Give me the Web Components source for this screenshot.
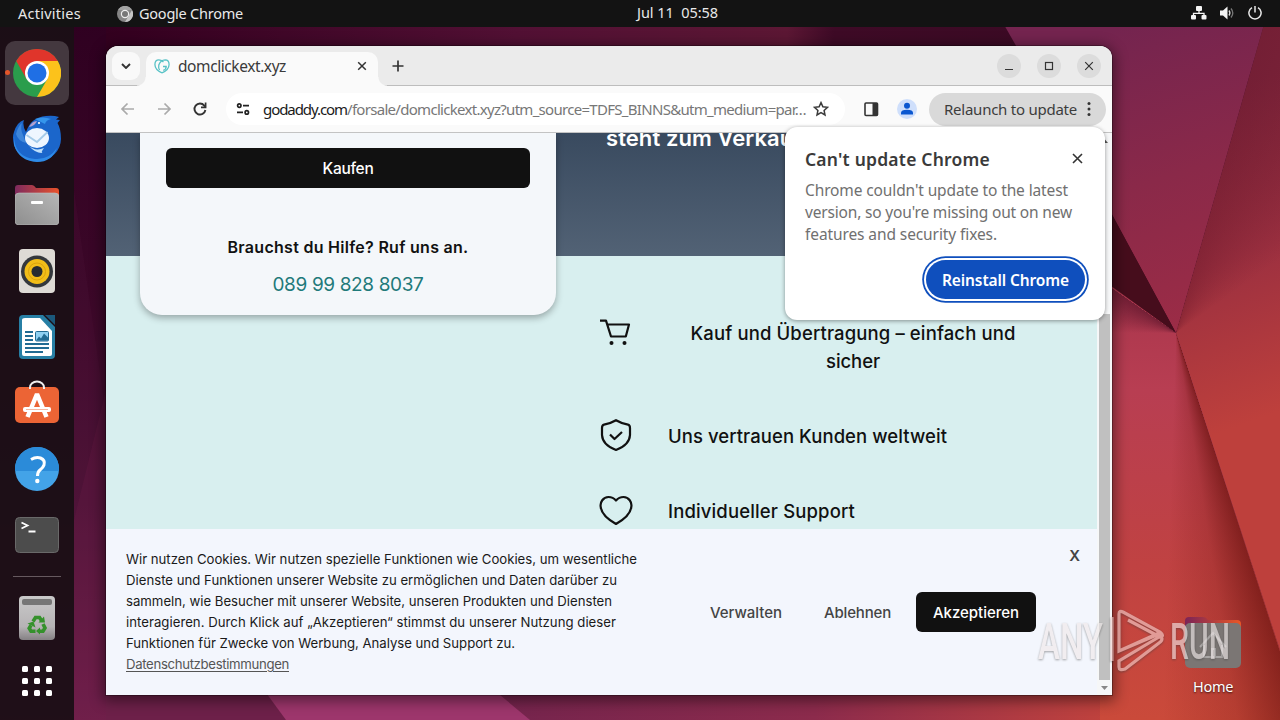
<!DOCTYPE html>
<html lang="de">
<head>
<meta charset="utf-8">
<title>Desktop</title>
<style>
html,body{margin:0;height:100%;overflow:hidden;background:#300020}
body{font-family:"Noto Sans","Open Sans",sans-serif}
</style>
</head>
<body>
<desk-top>
  <top-bar slot="bar"></top-bar>
  <side-dock slot="dock"></side-dock>
  <browser-window slot="window"><sale-page></sale-page></browser-window>
  <home-icon slot="icon"></home-icon>
  <water-mark slot="mark"></water-mark>
</desk-top>
<script>
function component(name, css, html) {
  const t = document.createElement('template');
  t.innerHTML = '<style>' + css + '</style>' + html;
  customElements.define(name, class extends HTMLElement {
    constructor() {
      super();
      this.attachShadow({mode: 'open'}).append(t.content.cloneNode(true));
    }
  });
}

component('desk-top', `
:host{display:block;position:relative;width:1280px;height:720px;overflow:hidden}
.wall,.folds{position:absolute;inset:0}
.folds{clip-path:inset(0 0 0 1105px);background:conic-gradient(at 1176px 333px,transparent 15.900deg,rgba(80,10,30,.3) 16deg,transparent 55deg,transparent 161.800deg,rgba(105,18,14,.7) 162deg,rgba(120,24,20,.25) 171deg,transparent 182deg,transparent 270deg,rgba(60,8,30,.5) 304.800deg,transparent 305deg)}
.shell{position:relative;height:720px;display:grid;grid-template:27px 693px/74px 1fr}
.canvas{position:relative}
::slotted([slot=window]){position:absolute;left:32px;top:19px}
::slotted([slot=icon]){position:absolute;left:1106px;top:585px}
::slotted([slot=mark]){position:absolute;left:956px;top:578px}
`, `
<svg class="wall" width="1280" height="720" viewBox="0 0 1280 720">
<defs>
<linearGradient id="l" x1="0" y1="0" x2="0" y2="1"><stop offset="0" stop-color="#2e0020"/><stop offset=".4" stop-color="#3b0728"/><stop offset=".7" stop-color="#4c1236"/><stop offset="1" stop-color="#701f4a"/></linearGradient>
<linearGradient id="t" x1="0" y1="0" x2="1" y2="0"><stop offset="0" stop-color="#33001f"/><stop offset=".35" stop-color="#521034"/><stop offset=".58" stop-color="#5c1734"/><stop offset=".62" stop-color="#3e0a26"/><stop offset="1" stop-color="#380a22"/></linearGradient>
<linearGradient id="a" x1="1110" y1="30" x2="1200" y2="330" gradientUnits="userSpaceOnUse"><stop offset="0" stop-color="#74244f"/><stop offset=".5" stop-color="#8a2949"/><stop offset="1" stop-color="#9c2c46"/></linearGradient>
<linearGradient id="b" x1="1200" y1="100" x2="1310" y2="400" gradientUnits="userSpaceOnUse"><stop offset="0" stop-color="#84283f"/><stop offset=".5" stop-color="#9c3040"/><stop offset="1" stop-color="#be403c"/></linearGradient>
<linearGradient id="c" x1="0" y1="280" x2="0" y2="720" gradientUnits="userSpaceOnUse"><stop offset="0" stop-color="#a8354c"/><stop offset=".25" stop-color="#b83e52"/><stop offset=".65" stop-color="#c04242"/><stop offset="1" stop-color="#ca4a3a"/></linearGradient>
<linearGradient id="d" x1="500" y1="0" x2="1130" y2="0" gradientUnits="userSpaceOnUse"><stop offset="0" stop-color="#75244d"/><stop offset=".5" stop-color="#8c2b4c"/><stop offset="1" stop-color="#c4443c"/></linearGradient>
</defs>
<rect width="1280" height="720" fill="url(#l)"/>
<path d="M74 190l32 225v305H74z" fill="#64204a" opacity=".12"/><path d="M74 520l32-130v330H74z" fill="#7a2450" opacity=".18"/>
<rect x="106" width="1174" height="60" fill="url(#t)"/>
<path d="M230 690H1120v30H230z" fill="url(#d)"/>
<path d="M106 690H268l18 30H106z" fill="#6d2049"/>
<path d="M264 690H494l36 30H286z" fill="#9d366c"/>
<path d="M990 0H1271L1176 333L1105 202z" fill="url(#a)"/>
<path d="M1271 0h9V650L1176 333z" fill="url(#b)"/>
<path d="M1100 192l76 141-76-53z" fill="#460d1c"/>
<path d="M1100 278L1176 333L1280 650V720H1100z" fill="url(#c)"/>
</svg>
<div class="folds"></div>
<div class="shell"><slot name="bar"></slot><slot name="dock"></slot>
<div class="canvas"><slot name="window"></slot><slot name="icon"></slot><slot name="mark"></slot></div></div>
`);

component('top-bar', `
:host{grid-column:1/3;display:flex;align-items:center;height:27px;background:#131313;color:#e9e9e9;font-size:14.5px;line-height:27px;box-sizing:border-box;padding-left:18px}
.app{margin-left:36px;margin-right:6px}
.clock{margin-left:394px;margin-top:-2px}
.sys{display:flex;align-items:center;gap:13px;margin-left:473px;margin-top:-1px}
svg{display:block}
`, `
<fit-text w="63">Activities</fit-text>
<svg class="app" width="16" height="16" viewBox="0 0 16 16"><circle cx="8" cy="8" r="8" fill="#858585"/><path d="M1 4a8 8 0 0 1 14 0H8z" fill="#a2a2a2"/><path d="M15 4a8 8 0 0 1-7 12l3.500-6z" fill="#c4c4c4"/><circle cx="8" cy="8" r="4.200" fill="#eee"/><circle cx="8" cy="8" r="3" fill="#777"/></svg>
<fit-text w="104">Google Chrome</fit-text>
<fit-text class="clock" w="81">Jul 11  05:58</fit-text>
<div class="sys">
<svg width="16" height="14" viewBox="0 0 16 14" fill="#f4f4f4"><rect x="5" y="0" width="6" height="5" rx="1"/><rect x="0" y="9" width="5" height="4.5" rx="1"/><rect x="10.500" y="9" width="5" height="4.500" rx="1"/><path d="M8 5v3M2.500 9V7.300h10.500V9" fill="none" stroke="#f4f4f4" stroke-width="1.300"/></svg>
<svg width="15" height="14" viewBox="0 0 15 14" fill="#f4f4f4"><path d="M0 4.500h3L7.500 0.500v13L3 9.500H0z"/><path d="M9 4.500q1.800 2.500 0 5" fill="none" stroke="#ddd" stroke-width="1.300"/><path d="M11 2.500q3.600 4.500 0 9" fill="none" stroke="#777" stroke-width="1.300"/></svg>
<svg width="14" height="14" viewBox="0 0 14 14" fill="none" stroke="#e8e8e8" stroke-width="1.500"><path d="M4 1.600a6.100 6.100 0 1 0 6 0M7 0v6.500"/></svg>
</div>
`);

component('dock-item', `
:host{display:flex;width:64px;height:64px;border-radius:10px;align-items:center;justify-content:center;position:relative}
:host([active]){background:#44383f}
:host([active])::before{content:"";position:absolute;left:0;top:29px;width:5px;height:5px;border-radius:3px;background:#e5562a}
`, `<slot></slot>`);

component('side-dock', `
:host{display:flex;flex-direction:column;align-items:center;gap:2px;height:693px;box-sizing:border-box;padding-top:14px;background:rgba(27,15,21,.94)}
hr{width:48px;height:1px;border:0;margin:7px 0;background:#66595f;flex:none}
svg{display:block}
.apps{margin-top:-3px}
`, `
<dock-item active><svg width="48" height="48" viewBox="-24 -24 48 48"><circle r="24" fill="#2a9d4c"/><path d="M20.800-12A24 24 0 0 1 0 24L10.400 6 0-12z" fill="#fcc21b"/><path d="M-20.800-12A24 24 0 0 1 20.800-12H0L-10.400 6z" fill="#e0352b"/><circle r="12" fill="#fff"/><circle r="9.500" fill="#1f6fe5"/></svg></dock-item>
<dock-item><svg width="48" height="48" viewBox="0 0 48 48"><path d="M1 17Q4 7 11 5Q9 10 13 17Q18 2 33 1Q40 0 46 2L43 4.500L47 5L44.500 8Q48 14 48 24A24 23 0 0 1 1 30Q-1 22 1 17z" fill="#1b66cb"/><path d="M1 20Q1 42 22 44Q36 45 44 33Q39 47 24 47Q6 46 1 30z" fill="#2f8be8"/><path d="M3 19q2-8 6-11-2 6 1 12l3 8q-8-2-10-9z" fill="#3e86da"/><path d="M22 4Q30 1 38 4q-5 1-6 5z" fill="#3596ec"/><ellipse cx="24" cy="23" rx="12" ry="10" fill="#eef6ff"/><path d="M13.500 20l10.500 7 10.500-10" fill="none" stroke="#a5cbe9" stroke-width="1.800"/><path d="M15 30q7 7 16 3-4 5-1 5-7 1-15-8z" fill="#bfe0fb"/><path d="M16 12q3-6 8-6-2 5-8 6z" fill="#b4a0cf"/><circle cx="26" cy="8" r="1.100" fill="#fff"/></svg></dock-item>
<dock-item><svg width="44" height="40" viewBox="0 0 44 40"><defs><linearGradient id="f"><stop stop-color="#7e2a5e"/><stop offset="1" stop-color="#e9522b"/></linearGradient><linearGradient id="g" x1="0" y1="1" x2="1" y2="0"><stop stop-color="#8e8e8e"/><stop offset="1" stop-color="#b6b6b6"/></linearGradient></defs><path d="M0 14V3q0-3 3-3h14q2 0 4 3h20q3 0 3 3v8z" fill="url(#f)"/><rect y="8" width="44" height="32" rx="4" fill="url(#g)" stroke="#c0c0c0" stroke-width=".6"/><rect x="16" y="16" width="12" height="3" rx="1" fill="#fff"/></svg></dock-item>
<dock-item><svg width="36" height="44" viewBox="0 0 36 44"><rect width="36" height="44" rx="4" fill="#dedad5"/><circle cx="18" cy="22.500" r="16" fill="#34373c"/><circle cx="18" cy="22.500" r="12.500" fill="#f2bd18"/><circle cx="18" cy="22.500" r="8.500" fill="none" stroke="#dba30e"/><circle cx="18" cy="22.500" r="5.500" fill="#272b31"/></svg></dock-item>
<dock-item><svg width="36" height="44" viewBox="0 0 36 44"><path d="M4 0h20l12 12v28q0 4-4 4H4q-4 0-4-4V4q0-4 4-4z" fill="#277fa5"/><path d="M26 0h10v10z" fill="#1b587b"/><path d="M6 3h15l12 13v23q0 2-2 2H5q-2 0-2-2V5q0-2 3-2z" fill="#fff"/><path d="M6 17h8m-8 4h8m-8 4h8m-8 4h24M6 33h24M6 37h18" stroke="#226b93" stroke-width="1.800"/><rect x="16.500" y="16.500" width="13" height="9.500" rx="1" fill="#8fd0f2" stroke="#226b93"/><path d="M17 25.500l3-4 2 2 3-5 4 4v3z" fill="#226b93"/></svg></dock-item>
<dock-item><svg width="44" height="44" viewBox="0 0 44 44" style="margin-top:-5px"><rect y="8" width="44" height="36" rx="5" fill="#ec6435"/><path d="M15 10V8.500a7 6 0 0 1 14 0V10" fill="none" stroke="#eee" stroke-width="2"/><path d="M12.500 38l9.500-23 9.500 23" fill="none" stroke="#fff" stroke-width="4.500" stroke-linejoin="bevel"/><rect x="8" y="28" width="28" height="5" rx="2" fill="#fff"/><path d="M11 30.500h22" stroke="#f4b8a2" stroke-width="1"/></svg></dock-item>
<dock-item><svg width="44" height="44" viewBox="0 0 44 44"><circle cx="22" cy="22" r="22" fill="#43a3e8"/><path d="M.1 24A22 22 0 1 1 43.900 24z" fill="#2b8bd9"/><path d="M16 12.500q5-3 9.500-1.500 5 2 3.500 7-.8 2.500-4 5-2.500 2-2.500 6" fill="none" stroke="#fff" stroke-width="3"/><circle cx="22.300" cy="34" r="2.200" fill="#fff"/></svg></dock-item>
<dock-item><svg width="44" height="36" viewBox="0 0 44 36"><rect x=".5" y=".5" width="43" height="35" rx="4" fill="#4c4c4c" stroke="#696969"/><path d="M6.500 5.500l6 3-6 3M13.500 14.500h7" fill="none" stroke="#fff" stroke-width="1.800"/></svg></dock-item>
<hr>
<dock-item><svg width="36" height="44" viewBox="0 0 36 44"><defs><linearGradient id="h" x2="0" y2="1"><stop stop-color="#c9c9c9"/><stop offset=".7" stop-color="#b6b3b5"/><stop offset="1" stop-color="#858184"/></linearGradient></defs><rect width="36" height="44" rx="4" fill="url(#h)"/><rect x="3" y="3" width="30" height="6" rx="2" fill="#767676"/><g fill="none" stroke="#35912c" stroke-width="3.600"><path d="M14 25.500l2.500-4h4l2 3"/><path d="M24 28l2 4-2 3.200h-3.500"/><path d="M16.500 35.200h-4.500l-1.800-3 1.800-3"/></g><path d="M19.500 26.500h6.500l-1-6zM21 31.500v7l-4-3.500zM8.500 27.500l6-2 2 6z" fill="#35912c"/></svg></dock-item>
<dock-item class="apps"><svg width="30" height="30" viewBox="0 0 30 30" fill="#fff"><rect width="6" height="6" rx="1.500"/><rect x="12" width="6" height="6" rx="1.500"/><rect x="24" width="6" height="6" rx="1.500"/><rect y="12" width="6" height="6" rx="1.500"/><rect x="12" y="12" width="6" height="6" rx="1.500"/><rect x="24" y="12" width="6" height="6" rx="1.500"/><rect y="24" width="6" height="6" rx="1.500"/><rect x="12" y="24" width="6" height="6" rx="1.500"/><rect x="24" y="24" width="6" height="6" rx="1.500"/></svg></dock-item>
`);

component('browser-window', `
:host{display:block;width:1006px;height:649px}
.win{display:flex;flex-direction:column;height:649px;border-radius:12px 12px 0 0;overflow:hidden;background:#fafafa;box-shadow:0 3px 14px 3px rgba(0,0,0,.45),0 0 0 1px rgba(0,0,0,.28)}
.view{display:flex;height:562px}
.page{display:block;width:991px;height:562px;overflow:hidden}
update-bubble{position:absolute;left:679px;top:81px}
`, `
<div class="win"><tab-strip></tab-strip><tool-bar></tool-bar>
<div class="view"><div class="page"><slot></slot></div><scroll-bar></scroll-bar></div></div>
<update-bubble></update-bubble>
`);

component('tab-strip', `
:host{display:flex;height:40px;box-sizing:border-box;padding:6px 11px 0 6px;background:linear-gradient(#ebebeb 39px,#bdbdbd 39px);color:#3b3b3b}
svg{display:block}
.search{width:28px;height:28px;border-radius:9px;background:#f9f9f9;display:grid;place-items:center}
.tab{position:relative;margin-left:6px;width:232px;height:34px;box-sizing:border-box;padding:0 11px 6px 8px;display:flex;align-items:center;background:#fafafa;border-radius:10px 10px 0 0;font-size:15.500px}
.tab::before,.tab::after{content:"";position:absolute;bottom:0;width:9px;height:9px}
.tab::before{left:-9px;background:radial-gradient(circle at 0 0,transparent 8px,#fafafa 9px)}
.tab::after{right:-9px;background:radial-gradient(circle at 100% 0,transparent 8px,#fafafa 9px)}
fit-text{margin-left:8px}
.x{margin-left:auto}
.plus{margin:8px 0 0 14px}
.ctl{margin-left:auto;display:flex;gap:16px;margin-top:2px}
.ctl i{width:24px;height:24px;border-radius:12px;background:#dcdcdc;display:grid;place-items:center}
`, `
<div class="search"><svg width="10" height="6" viewBox="0 0 10 6"><path d="M1 1l4 4 4-4" fill="none" stroke="#333" stroke-width="1.900"/></svg></div>
<div class="tab"><svg width="16" height="15" viewBox="0 0 16 15" fill="none" stroke="#58c2c6" stroke-width="1.300"><path d="M8 13.800Q1 11 .9 5.500 1 .8 4.800.8 7 .8 9.500 3M8 13.800Q15 11 15.100 5.500 15 .8 11.200.8 6.500 1 4.800 6q-.6 3 .8 5M9 7.500h3.200q0 3-3 3.800"/></svg><fit-text w="108">domclickext.xyz</fit-text><svg class="x" width="10" height="10" viewBox="0 0 10 10"><path d="M1.200 1.200l7.600 7.600M8.800 1.200L1.200 8.800" stroke="#333" stroke-width="1.500"/></svg></div>
<svg class="plus" width="12" height="12" viewBox="0 0 12 12"><path d="M6 .5v11M.5 6h11" stroke="#333" stroke-width="1.700"/></svg>
<div class="ctl"><i><svg width="10" height="10"><path d="M1 8.500h8" stroke="#333" stroke-width="1.200"/></svg></i><i><svg width="10" height="10"><rect x="1.500" y="1.500" width="7" height="7" fill="none" stroke="#333" stroke-width="1.200"/></svg></i><i><svg width="10" height="10"><path d="M1.200 1.200l7.600 7.600M8.800 1.200L1.200 8.800" stroke="#333" stroke-width="1.200"/></svg></i></div>
`);

component('tool-bar', `
:host{display:flex;align-items:center;height:47px;box-sizing:border-box;border-bottom:1px solid #c3c3c3;padding:0 6px 0 14px;background:#fafafa;color:#3d3d3d;font-size:15px}
svg{display:block;flex:none}
.n{margin-right:20px}
.box{display:flex;align-items:center;width:619px;height:32px;margin-left:18px;border-radius:16px;background:#fff;box-sizing:border-box;padding:0 16px 0 10px}
.box fit-text{color:#777}.box .d{color:#1b1b1b;margin-left:13px}
.star{margin-left:7px}
.side{margin-left:19px}
.av{margin-left:18px}
.chip{margin-left:auto;display:flex;align-items:center;width:177px;height:33px;border-radius:17px;background:#d9d9d9;box-sizing:border-box;padding-left:15px}
.chip svg{margin-left:10px}
`, `
<svg class="n" width="16" height="14" viewBox="0 0 16 14" fill="none" stroke="#aaa" stroke-width="1.700"><path d="M14 7H2M7.500 1.500L2 7l5.500 5.500"/></svg>
<svg class="n" width="16" height="14" viewBox="0 0 16 14" fill="none" stroke="#aaa" stroke-width="1.700"><path d="M2 7h12M8.500 1.500L14 7l-5.500 5.500"/></svg>
<svg width="16" height="16" viewBox="0 0 16 16" fill="none" stroke="#333" stroke-width="1.900"><path d="M13.400 9A5.500 5.500 0 1 1 12.300 4.600L13.500 6"/><path d="M13.600 1.500v4.800H9" stroke-width="1.700"/></svg>
<div class="box"><svg width="14" height="12" viewBox="0 0 14 12" fill="none" stroke="#222" stroke-width="1.700"><circle cx="3.300" cy="2.600" r="1.700"/><path d="M7 2.600h6M1 9.400h6"/><circle cx="10.800" cy="9.400" r="1.700"/></svg><fit-text class="d" w="84">godaddy.com</fit-text><fit-text w="459">/forsale/domclickext.xyz?utm_source=TDFS_BINNS&amp;utm_medium=par…</fit-text><svg class="star" width="16" height="16" viewBox="0 0 16 16" fill="none" stroke="#3b3b3b" stroke-width="1.500"><path d="M8 1.600l1.900 4.200 4.600.5-3.400 3.100.9 4.600L8 11.700 4 14l.9-4.600L1.500 6.300l4.600-.5z"/></svg></div>
<svg class="side" width="15" height="15" viewBox="0 0 15 15"><rect x="1" y="1" width="12.500" height="12.500" rx="1" fill="none" stroke="#333" stroke-width="1.600"/><path d="M8.500 1h5v12.500h-5z" fill="#333"/></svg>
<svg class="av" width="20" height="20" viewBox="0 0 20 20"><circle cx="10" cy="10" r="10" fill="#cfdffb"/><circle cx="10" cy="6.700" r="3" fill="#0b57d0"/><path d="M4 15.500v-1.700q0-3 6-3t6 3v1.700z" fill="#0b57d0"/></svg>
<div class="chip"><fit-text w="133">Relaunch to update</fit-text><svg width="4" height="16" viewBox="0 0 4 16" fill="#333"><circle cx="2" cy="2.500" r="1.500"/><circle cx="2" cy="8" r="1.500"/><circle cx="2" cy="13.500" r="1.500"/></svg></div>
`);

component('scroll-bar', `
:host{display:flex;flex-direction:column;align-items:center;justify-content:space-between;width:15px;height:562px;background:#f6f7f8}
svg{display:block;margin:6px 0 5px}
.t{margin-top:auto;width:11px;height:366px;background:#c0c0c0}
`, `<svg width="7" height="4"><path d="M0 4L3.500 0 7 4z" fill="#555"/></svg><div class="t"></div><svg width="7" height="4"><path d="M0 0h7L3.500 4z" fill="#888"/></svg>`);

component('update-bubble', `
:host{display:flex;flex-direction:column;width:320px;height:193px;box-sizing:border-box;border-radius:12px;background:#fff;box-shadow:0 1px 4px rgba(0,0,0,.4);padding:18px 20px 0 20px;color:#707070;font-size:15.500px}
header{display:flex;justify-content:space-between;align-items:center;height:28px;color:#3a3a3a;font-size:17.500px;font-weight:600;margin-bottom:6px}
svg{display:block;margin:-2px 2px 0 0}
fit-text{line-height:22px}
button{align-self:flex-end;margin:15px 0 0;width:159px;height:39px;border-radius:20px;border:0;padding:0;display:grid;place-items:center;background:#0f4fbd;color:#fff;font:600 15.500px "Noto Sans",sans-serif;box-shadow:0 0 0 2px #fff,0 0 0 3.800px #0f4fbd}
`, `
<header><fit-text w="185">Can't update Chrome</fit-text><svg width="11" height="11"><path d="M1 1l9 9M10 1l-9 9" stroke="#333" stroke-width="1.600"/></svg></header>
<fit-text w="263">Chrome couldn't update to the latest</fit-text>
<fit-text w="267">version, so you're missing out on new</fit-text>
<fit-text w="192">features and security fixes.</fit-text>
<button><fit-text w="127">Reinstall Chrome</fit-text></button>
`);

component('feature-row', `
:host{display:grid;grid-template-columns:68px 370px;margin-top:47px;font-size:18.500px;line-height:28px;font-weight:500}
.ic{height:28px;display:flex;align-items:center}
.tx{display:flex;flex-direction:column}
:host([centered]) .tx{align-items:center}
`, `<div class="ic"><slot name="icon"></slot></div><div class="tx"><slot></slot></div>`);

component('sale-page', `
:host{display:flex;flex-direction:column;height:562px;font-family:Inter,"Noto Sans",sans-serif;color:#111}
main{height:396px;display:grid;grid-template-columns:416px 1fr;column-gap:44px;padding-left:34px;align-items:start;background:linear-gradient(#394a5f 0,#526275 123px,#d8efef 123px)}
.card{height:182px;border-radius:0 0 22px 22px;background:#f4f7fa;box-shadow:0 3px 7px rgba(0,0,0,.3);box-sizing:border-box;padding:15px 26px 0;display:flex;flex-direction:column;align-items:center}
.buy{width:364px;height:40px;background:#111;border-radius:6px;color:#fff;display:grid;place-items:center;font-size:15.500px;font-weight:500}
.help{margin-top:47px;font-size:16px;line-height:24px;font-weight:600}
.tel{margin-top:13px;font-size:19px;line-height:26px;color:#1f7a7a}
.right{display:flex;flex-direction:column}
h1{margin:-9px 0 120px;padding-left:6px;font-size:22px;line-height:28px;font-weight:600;color:#fff}
svg{display:block;overflow:visible;fill:none;stroke:#111;stroke-width:2.200}
`, `
<main>
<section class="card"><div class="buy"><fit-text w="51">Kaufen</fit-text></div><fit-text class="help" w="241">Brauchst du Hilfe? Ruf uns an.</fit-text><fit-text class="tel" w="151">089 99 828 8037</fit-text></section>
<section class="right"><h1><fit-text w="196">steht zum Verkauf</fit-text></h1>
<feature-row centered><svg slot="icon" width="32" height="26" viewBox="0 0 32 26"><path d="M0 .7h6l5 15.800h14.800l3.200-12H7.200" stroke-linejoin="round"/><circle cx="11.500" cy="23" r="2" fill="#111" stroke="none"/><circle cx="24.500" cy="23" r="2" fill="#111" stroke="none"/></svg><fit-text w="325">Kauf und Übertragung – einfach und</fit-text><fit-text w="54">sicher</fit-text></feature-row>
<feature-row><svg slot="icon" width="32" height="32" viewBox="0 0 32 32" stroke-linejoin="round" style="margin-top:-2px"><path d="M16 1.200Q21 4.200 28 5.600Q30 6 30 9V16Q29.500 26 16 31Q2.500 26 2 16V9Q2 6 4 5.600Q11 4.200 16 1.200z"/><path d="M10 15.500l4.500 4.500 7.500-7"/></svg><fit-text w="279">Uns vertrauen Kunden weltweit</fit-text></feature-row>
<feature-row><svg slot="icon" width="32" height="29" viewBox="0 0 32 29" stroke-linejoin="round" style="margin-top:-2px"><path d="M16 28Q2 20 .8 11.500A8 8.500 0 0 1 8.500 1Q13 1 16 4.500Q19 1 23.500 1A8 8.500 0 0 1 31.200 11.500Q30 20 16 28z"/></svg><fit-text w="187">Individueller Support</fit-text></feature-row>
</section></main><cookie-banner></cookie-banner>
`);

component('cookie-banner', `
:host{display:grid;grid-template-columns:564px 1fr auto;height:166px;box-sizing:border-box;padding:20px 17px 0 20px;background:#f3f6fd;font-size:13.200px;line-height:21px;color:#1a1a1a;align-items:start}
.t{display:flex;flex-direction:column;align-items:flex-start}
.t .l{color:#555;--line:underline}
.b{display:flex;align-items:center;margin-top:43px;height:40px;font-size:15px;font-weight:500;color:#444;padding-left:20px}
.b .q{margin-left:42px}
.b .a{margin-left:25px;width:120px;height:40px;border-radius:6px;background:#111;color:#fff;display:grid;place-items:center}
.x{font-size:15px;font-weight:600;color:#444;margin-top:-4px}
`, `
<div class="t"><fit-text w="511">Wir nutzen Cookies. Wir nutzen spezielle Funktionen wie Cookies, um wesentliche</fit-text>
<fit-text w="491">Dienste und Funktionen unserer Website zu ermöglichen und Daten darüber zu</fit-text>
<fit-text w="486">sammeln, wie Besucher mit unserer Website, unseren Produkten und Diensten</fit-text>
<fit-text w="490">interagieren. Durch Klick auf „Akzeptieren“ stimmst du unserer Nutzung dieser</fit-text>
<fit-text w="389">Funktionen für Zwecke von Werbung, Analyse und Support zu.</fit-text>
<fit-text class="l" w="163">Datenschutzbestimmungen</fit-text></div>
<div class="b"><fit-text w="72">Verwalten</fit-text><fit-text class="q" w="67">Ablehnen</fit-text><div class="a"><fit-text w="86">Akzeptieren</fit-text></div></div>
<div class="x">X</div>
`);

component('home-icon', `
:host{display:flex;flex-direction:column;align-items:center;gap:8px;width:66px;color:#fff;font-size:14.500px;line-height:20px;text-shadow:0 1px 2px rgba(0,0,0,.7);padding-top:5px}
svg{display:block}
`, `<svg width="56" height="51" viewBox="0 0 56 51"><defs><linearGradient id="f"><stop stop-color="#7b2457"/><stop offset="1" stop-color="#ea5726"/></linearGradient></defs><path d="M0 14V4q0-4 4-4h14q3 0 5 3h29q4 0 4 4v7z" fill="url(#f)"/><rect y="6" width="56" height="45" rx="5" fill="#7b7674"/><path d="M15 30l13-14 13 14M19 28v12h18V28M27 40v-8h3v8" fill="none" stroke="#aaa7a6" stroke-width="2"/></svg><fit-text w="40">Home</fit-text>`);

component('water-mark', `
:host{display:block;width:230px;height:72px;opacity:.62}
svg{display:block;filter:drop-shadow(0 1px 1px rgba(60,60,60,.75))}
text{font-family:Roboto,sans-serif;font-weight:500;font-size:50px;fill:#f0e9e9}
`, `<svg width="230" height="72" viewBox="0 0 230 72"><text x="8" y="54" textLength="65" lengthAdjust="spacingAndGlyphs">ANY</text><path d="M82 12v44M89 25V9q0-4 4-2l37 20q5 4 0 5L98 15M89 22v24l40-18M89 46L129 29q6 5 0 9L95 64q-6 2-6-2v-6l40-24" fill="none" stroke="#f3d0cd" stroke-width="3.200"/><text x="140" y="54" textLength="60" lengthAdjust="spacingAndGlyphs">RUN</text></svg>`);

/* One line of text, tracked so that it fills the width given in its "w" attribute. */
customElements.define('fit-text', class extends HTMLElement {
  constructor() {
    super();
    this.attachShadow({mode: 'open'}).innerHTML =
      '<style>:host{display:block;white-space:pre;flex:none}span{display:inline-block;text-decoration:var(--line,none);text-underline-offset:2px}</style><span><slot></slot></span>';
  }
  connectedCallback() {
    const w = +this.getAttribute('w');
    const span = this.shadowRoot.querySelector('span');
    this.style.width = w + 'px';
    const natural = span.getBoundingClientRect().width;
    span.style.letterSpacing = (w - natural) / this.textContent.length + 'px';
  }
});
</script>
</body>
</html>
